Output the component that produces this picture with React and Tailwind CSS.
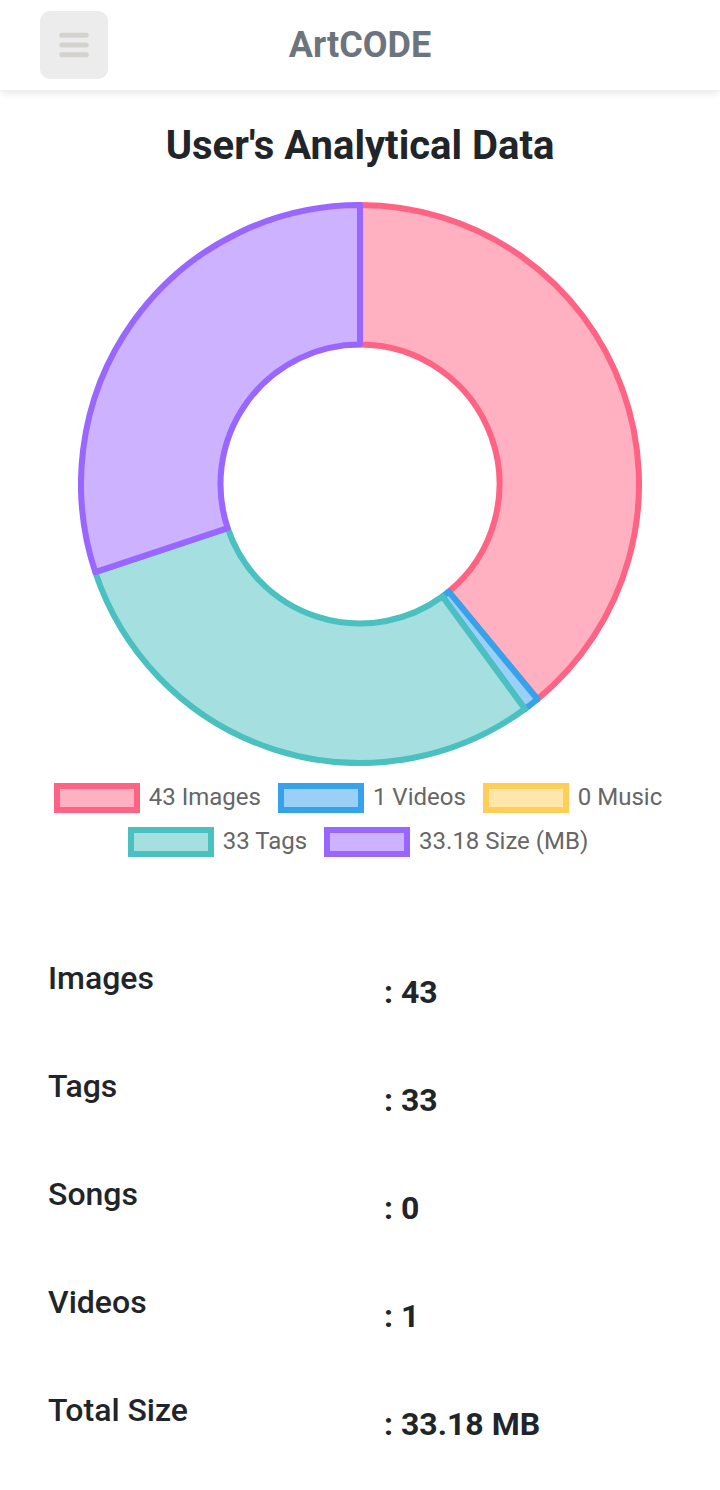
const SLICES = [
  { label: "43 Images", value: 43, stroke: "#ff6384", fill: "#ffb1c1", swatch: "border-[#ff6384] bg-[#ffb1c1]" },
  { label: "1 Videos", value: 1, stroke: "#36a2eb", fill: "#9ad0f5", swatch: "border-[#36a2eb] bg-[#9ad0f5]" },
  { label: "0 Music", value: 0, stroke: "#ffce56", fill: "#ffe6aa", swatch: "border-[#ffce56] bg-[#ffe6aa]" },
  { label: "33 Tags", value: 33, stroke: "#4bc0c0", fill: "#a5dfdf", swatch: "border-[#4bc0c0] bg-[#a5dfdf]" },
  { label: "33.18 Size (MB)", value: 33.18, stroke: "#9966ff", fill: "#ccb2ff", swatch: "border-[#9966ff] bg-[#ccb2ff]" },
];

const STATS = [
  ["Images", "43"],
  ["Tags", "33"],
  ["Songs", "0"],
  ["Videos", "1"],
  ["Total Size", "33.18 MB"],
];

const CENTER = 282;
const OUTER = 279;
const INNER = 139.5;

function point(radius, angle) {
  return `${CENTER + radius * Math.sin(angle)} ${CENTER - radius * Math.cos(angle)}`;
}

function slicePath(start, end) {
  const large = end - start > Math.PI ? 1 : 0;
  return [
    `M ${point(OUTER, start)}`,
    `A ${OUTER} ${OUTER} 0 ${large} 1 ${point(OUTER, end)}`,
    `L ${point(INNER, end)}`,
    `A ${INNER} ${INNER} 0 ${large} 0 ${point(INNER, start)}`,
    "Z",
  ].join(" ");
}

function Doughnut() {
  const total = SLICES.reduce((sum, s) => sum + s.value, 0);
  let angle = 0;
  const arcs = SLICES.map((s) => {
    const start = angle;
    angle += (s.value / total) * Math.PI * 2;
    return { ...s, start, end: angle };
  }).filter((s) => s.value > 0);
  return (
    <svg viewBox="0 0 564 564" className="block w-full" role="img" aria-label="Doughnut chart of stored items">
      {arcs.map((s) => (
        <path key={s.label} d={slicePath(s.start, s.end)} fill={s.fill} stroke={s.stroke} strokeWidth="6" strokeLinejoin="round" />
      ))}
    </svg>
  );
}

function Header() {
  return (
    <header className="grid h-[90px] grid-cols-[68px_1fr_68px] items-center bg-white px-10 shadow-[0_4px_8px_-1px_rgba(0,0,0,0.1)]">
      <button type="button" aria-label="Open menu" className="flex size-[68px] items-center justify-center rounded-[10px] bg-[#ececec]">
        <svg viewBox="0 0 30 26" className="h-[26px] w-[30px]" stroke="#d3d2ce" strokeWidth="5" strokeLinecap="round" aria-hidden="true">
          <path d="M2.8 3.2H27.2M2.8 13H27.2M2.8 22.7H27.2" />
        </svg>
      </button>
      <span className="text-center text-4xl font-bold text-[#6c757d]">ArtCODE</span>
    </header>
  );
}

export default function App() {
  return (
    <div className="bg-white font-[Roboto,sans-serif] text-[#212529]">
      <Header />
      <main>
        <h1 className="pt-8 text-center text-[40px] leading-12 font-bold">User's Analytical Data</h1>
        <div className="mt-8 px-[78px]">
          <Doughnut />
        </div>
        <ul className="mt-[17px] flex flex-wrap justify-center gap-x-[17px] gap-y-[14px] pr-9 pl-8 text-2xl leading-7 text-[#666666]">
          {SLICES.map((s) => (
            <li key={s.label} className="flex h-[30px] items-start gap-[9px]">
              <span className={`h-[30px] w-[86px] border-6 ${s.swatch}`} />
              <span>{s.label}</span>
            </li>
          ))}
        </ul>
        <dl className="mt-[101px] flex flex-col gap-[54px] pb-12 text-[32px] leading-10">
          {STATS.map(([name, value]) => (
            <div key={name} className="grid grid-cols-2 px-12">
              <dt className="font-medium">{name}</dt>
              <dd className="pt-[14px] pl-6 font-bold">: {value}</dd>
            </div>
          ))}
        </dl>
      </main>
    </div>
  );
}
